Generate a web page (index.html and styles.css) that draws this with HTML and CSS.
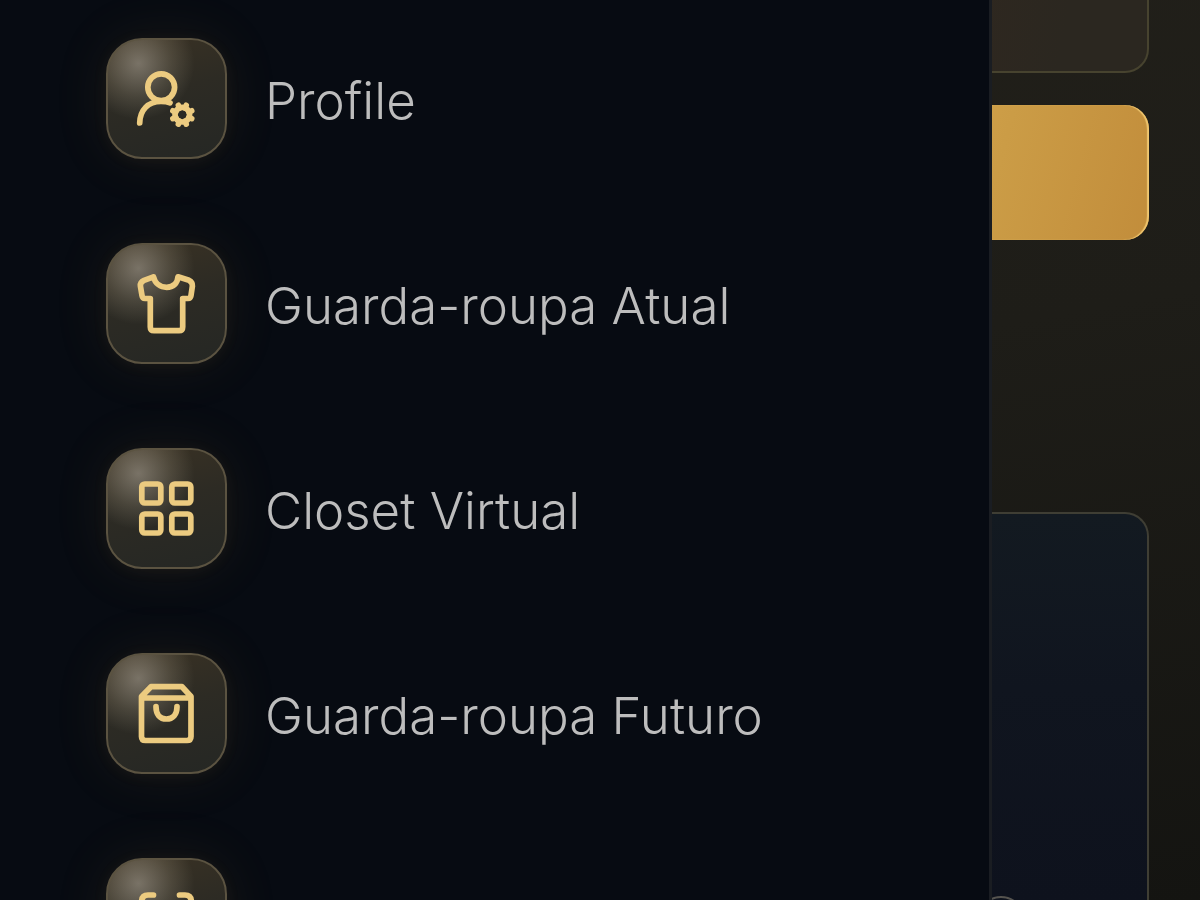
FILE: index.html
```html
<!DOCTYPE html>
<html lang="pt">
<head>
<meta charset="utf-8">
<meta name="viewport" content="width=device-width, initial-scale=1">
<title>Menu</title>
<link rel="stylesheet" href="styles.css">
</head>
<body>
<main class="page">
  <section class="card card-top"></section>
  <button class="cta" type="button" aria-label="Continuar"></button>
  <section class="card card-panel"><span class="bubble"></span></section>
</main>
<nav class="drawer" aria-label="Menu">
  <a class="item" href="#profile">
    <span class="tile"><svg class="icon" viewBox="0 0 71 71" aria-hidden="true">
      <circle cx="30.2" cy="24.3" r="13.4"/>
      <path d="M8.7 60C9 47 17 38.5 30 38.5c4 0 6.5.3 9 1.3"/>
      <circle cx="51.3" cy="51.7" r="7.3"/>
      <path d="M57.8 54.4l2.900 1.200M54 58.200l1.200 2.900M48.600 58.200l-1.200 2.900M44.800 54.400l-2.900 1.200M44.800 49l-2.900-1.200M48.600 45.200l-1.200-2.900M54 45.200l1.200-2.900M57.800 49l2.900-1.200"/>
    </svg></span>
    <span class="label">Profile</span>
  </a>
  <a class="item" href="#atual">
    <span class="tile"><svg class="icon" viewBox="0 0 71 71" aria-hidden="true">
      <path d="M22.5 8.800L13 12.300Q9 14 9.400 18L11 27.500Q11.500 30.500 14 30.500H19.300V59Q19.300 62.700 23 62.700H48Q51.700 62.700 51.700 59V30.500H57Q59.500 30.500 60 27.500L61.400 18Q61.700 14 58 12.300L47 8.800C46.500 15.500 42 19.300 35.700 19.300C29.500 19.300 24 15.500 22.500 8.800Z"/>
    </svg></span>
    <span class="label">Guarda-roupa Atual</span>
  </a>
  <a class="item" href="#closet">
    <span class="tile"><svg class="icon" viewBox="0 0 71 71" aria-hidden="true">
      <rect x="10.8" y="11" width="19" height="19" rx="3"/>
      <rect x="40.8" y="11" width="19" height="19" rx="3"/>
      <rect x="10.8" y="41" width="19" height="19" rx="3"/>
      <rect x="40.8" y="41" width="19" height="19" rx="3"/>
    </svg></span>
    <span class="label">Closet Virtual</span>
  </a>
  <a class="item" href="#futuro">
    <span class="tile"><svg class="icon" viewBox="0 0 71 71" aria-hidden="true">
      <path d="M20 8.700H51L60 18.500V58.500Q60 62.500 56 62.500H14.500Q10.500 62.500 10.500 58.500V18.500ZM11 20H59.500M25 28.700C25 36.500 29 41 35.400 41S46 36.500 46 28.700"/>
    </svg></span>
    <span class="label">Guarda-roupa Futuro</span>
  </a>
  <a class="item" href="#scan" aria-label="Scanner">
    <span class="tile"><svg class="icon" viewBox="0 0 71 71" aria-hidden="true">
      <path d="M22.500 12H17Q10.700 12 10.700 18.500V24M48.500 12H54Q60.300 12 60.300 18.500V24M60.300 48V54Q60.300 60 54 60H48.500M22.500 60H17Q10.700 60 10.700 54V48"/>
    </svg></span>
  </a>
</nav>
</body>
</html>
```
FILE: styles.css
```css
* { box-sizing: border-box; }

html, body { height: 100%; }

body {
  margin: 0;
  overflow: hidden;
  font-family: Inter, "Open Sans", sans-serif;
  background: #1c1b17;
}

.page {
  display: flex;
  flex-direction: column;
  min-height: 100%;
  padding: 0 51px;
  background: linear-gradient(170deg, #22201a 0%, #1e1d18 45%, #141411 100%);
}

.card {
  border: 2px solid #47432f;
  border-radius: 24px;
}

.card-top {
  height: 73px;
  border-top: 0;
  border-radius: 0 0 24px 24px;
  background: linear-gradient(100deg, #33281f 70%, #2b2720 92%);
}

.cta {
  height: 135px;
  margin-top: 32px;
  border: 0;
  border-radius: 24px;
  background: linear-gradient(105deg, #d9a850 70%, #cb9c46 85%, #c28d3b 100%);
  box-shadow: inset -2px 0 1px #efc66f;
}

.card-panel {
  display: flex;
  flex: 1;
  align-items: flex-end;
  justify-content: flex-end;
  margin-top: 272px;
  padding-right: 122px;
  border-color: #3f3e34;
  border-bottom: 0;
  border-radius: 24px 24px 0 0;
  background: linear-gradient(#131a21 0%, #10151f 45%, #0e121d 100%);
}

.bubble {
  width: 48px;
  height: 48px;
  margin-bottom: -44px;
  border: 2px solid #55534f;
  border-radius: 24px;
}

.drawer {
  position: fixed;
  inset: 0 auto 0 0;
  display: flex;
  flex-direction: column;
  gap: 84px;
  width: 82.65%;
  padding: 38px 40px 0 106px;
  overflow: hidden;
  border-right: 3px solid #1a1d22;
  background: #070b12;
}

.item {
  display: flex;
  flex-shrink: 0;
  align-items: center;
  gap: 38px;
  color: #bdbdbd;
  text-decoration: none;
}

.tile {
  display: flex;
  flex-shrink: 0;
  align-items: center;
  justify-content: center;
  width: 121px;
  height: 121px;
  border: 2px solid #5b5341;
  border-radius: 36px;
  background:
    radial-gradient(circle at 26% 20%, rgba(255, 245, 230, 0.34) 0, rgba(255, 240, 210, 0.13) 26%, transparent 44%),
    linear-gradient(165deg, #3a3224 0%, #2d2b24 45%, #252724 100%);
  box-shadow: 0 0 56px rgba(200, 150, 60, 0.1), 0 2px 16px rgba(200, 150, 60, 0.06);
}

.icon {
  width: 71px;
  height: 71px;
  fill: none;
  stroke: #eccb80;
  stroke-width: 5.7;
  stroke-linecap: round;
  stroke-linejoin: round;
}

.label {
  padding-top: 5px;
  font-size: 51px;
  font-weight: 330;
  line-height: 64px;
  white-space: nowrap;
}
```
